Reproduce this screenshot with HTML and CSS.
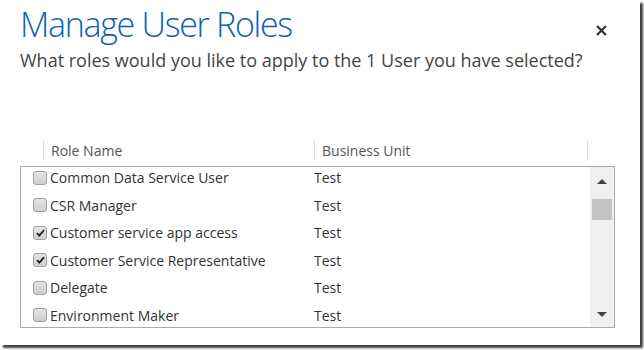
FILE: index.html
```html
<!DOCTYPE html>
<html lang="en">

<head>
    <meta charset="UTF-8" />
    <title>Manage User Roles</title>
    <link rel="stylesheet" href="styles.css">
</head>

<body>

    <div class="dialog">
        <div class="dialog-head">
            <div class="titles">
                <h1 class="title">Manage User Roles</h1>
                <p class="subtitle">What roles would you like to apply to the 1 User you have selected?</p>
            </div>
            <button class="close-btn" title="Close">
                <svg width="11" height="11" viewBox="0 0 11 11">
                    <path d="M1 1 L10 10 M10 1 L1 10" stroke="#333" stroke-width="2.2" fill="none" />
                </svg>
            </button>
        </div>

        <div class="grid">
            <div class="grid-head">
                <div class="head-cell head-select"></div>
                <div class="head-cell head-role">Role Name</div>
                <div class="head-cell head-unit">Business Unit</div>
                <div class="head-cell head-end"></div>
            </div>

            <div class="listbox">
                <div class="rows">
                    <div class="row">
                        <span class="check"></span>
                        <span class="role">Common Data Service User</span>
                        <span class="unit">Test</span>
                    </div>
                    <div class="row">
                        <span class="check"></span>
                        <span class="role">CSR Manager</span>
                        <span class="unit">Test</span>
                    </div>
                    <div class="row">
                        <span class="check checked">
                            <svg width="9" height="8" viewBox="0 0 9 8"><path d="M1 4.2 L3.4 6.6 L8 1.2" stroke="#222" stroke-width="1.8" fill="none" /></svg>
                        </span>
                        <span class="role">Customer service app access</span>
                        <span class="unit">Test</span>
                    </div>
                    <div class="row">
                        <span class="check checked">
                            <svg width="9" height="8" viewBox="0 0 9 8"><path d="M1 4.2 L3.4 6.6 L8 1.2" stroke="#222" stroke-width="1.8" fill="none" /></svg>
                        </span>
                        <span class="role">Customer Service Representative</span>
                        <span class="unit">Test</span>
                    </div>
                    <div class="row">
                        <span class="check"></span>
                        <span class="role">Delegate</span>
                        <span class="unit">Test</span>
                    </div>
                    <div class="row">
                        <span class="check"></span>
                        <span class="role">Environment Maker</span>
                        <span class="unit">Test</span>
                    </div>
                </div>

                <div class="scrollbar">
                    <div class="scroll-btn scroll-up"><span class="arrow-up"></span></div>
                    <div class="scroll-thumb"></div>
                    <div class="scroll-track"></div>
                    <div class="scroll-btn scroll-down"><span class="arrow-down"></span></div>
                </div>
            </div>
        </div>
    </div>

</body>

</html>
```

FILE: styles.css
```css
* {
    box-sizing: border-box;
    margin: 0;
    padding: 0;
}

body {
    font-family: "Open Sans", "Noto Sans", sans-serif;
    background: white;
    width: 644px;
    height: 350px;
    overflow: hidden;
}

.dialog {
    width: 640px;
    height: 345px;
    background: white;
    box-shadow: 3px 3px 2px rgba(0, 0, 0, 0.75);
    padding: 0 0 0 20px;
}

.dialog-head {
    display: flex;
    justify-content: space-between;
    align-items: flex-start;
}

.title {
    font-size: 34px;
    line-height: 34px;
    font-weight: 300;
    letter-spacing: -1.3px;
    color: #1160b7;
    margin-top: 7px;
}

.subtitle {
    font-size: 18px;
    line-height: 24px;
    color: #444;
    margin-top: 7px;
}

.close-btn {
    background: none;
    border: none;
    width: 11px;
    height: 11px;
    margin: 25px 33px 0 0;
    cursor: pointer;
}

.close-btn svg {
    display: block;
}

/* tabela de funções */
.grid {
    margin-top: 68px;
    width: 595px;
}

.grid-head {
    display: flex;
    height: 20px;
    font-size: 14px;
    color: #555;
}

.head-cell {
    line-height: 18px;
    padding-top: 2px;
}

.head-select {
    width: 23px;
}

.head-role {
    width: 271px;
    border-left: 1px solid #ddd;
    padding-left: 7px;
}

.head-unit {
    width: 273px;
    border-left: 1px solid #ddd;
    padding-left: 7px;
}

.head-end {
    width: 1px;
    border-left: 1px solid #ddd;
}

.listbox {
    display: flex;
    margin-top: 6px;
    height: 162px;
    border: 1px solid #ababab;
    overflow: hidden;
}

.rows {
    flex: 1;
    margin-top: -3px;
}

.row {
    display: flex;
    align-items: center;
    height: 27.5px;
    font-size: 14px;
    color: #333;
}

.check {
    width: 14px;
    height: 14px;
    margin: 0 3px 0 12px;
    border: 1px solid #a0a0a0;
    border-radius: 3px;
    background: linear-gradient(#e4e4e4, #cfcfcf);
    display: flex;
    align-items: center;
    justify-content: center;
}

.role {
    width: 264px;
}

.unit {
    flex: 1;
}

.scrollbar {
    width: 24px;
    background: #f0f0f0;
    display: flex;
    flex-direction: column;
    align-items: center;
}

.scroll-btn {
    width: 100%;
    display: flex;
    align-items: center;
    justify-content: center;
}

.scroll-up {
    height: 28px;
}

.scroll-down {
    height: 26px;
}

.arrow-up {
    width: 0;
    height: 0;
    border-left: 5px solid transparent;
    border-right: 5px solid transparent;
    border-bottom: 5px solid #444;
}

.arrow-down {
    width: 0;
    height: 0;
    border-left: 5px solid transparent;
    border-right: 5px solid transparent;
    border-top: 5px solid #444;
}

.scroll-thumb {
    width: 20px;
    height: 21px;
    margin-top: 4px;
    background: #c4c4c4;
}

.scroll-track {
    flex: 1;
}
```
